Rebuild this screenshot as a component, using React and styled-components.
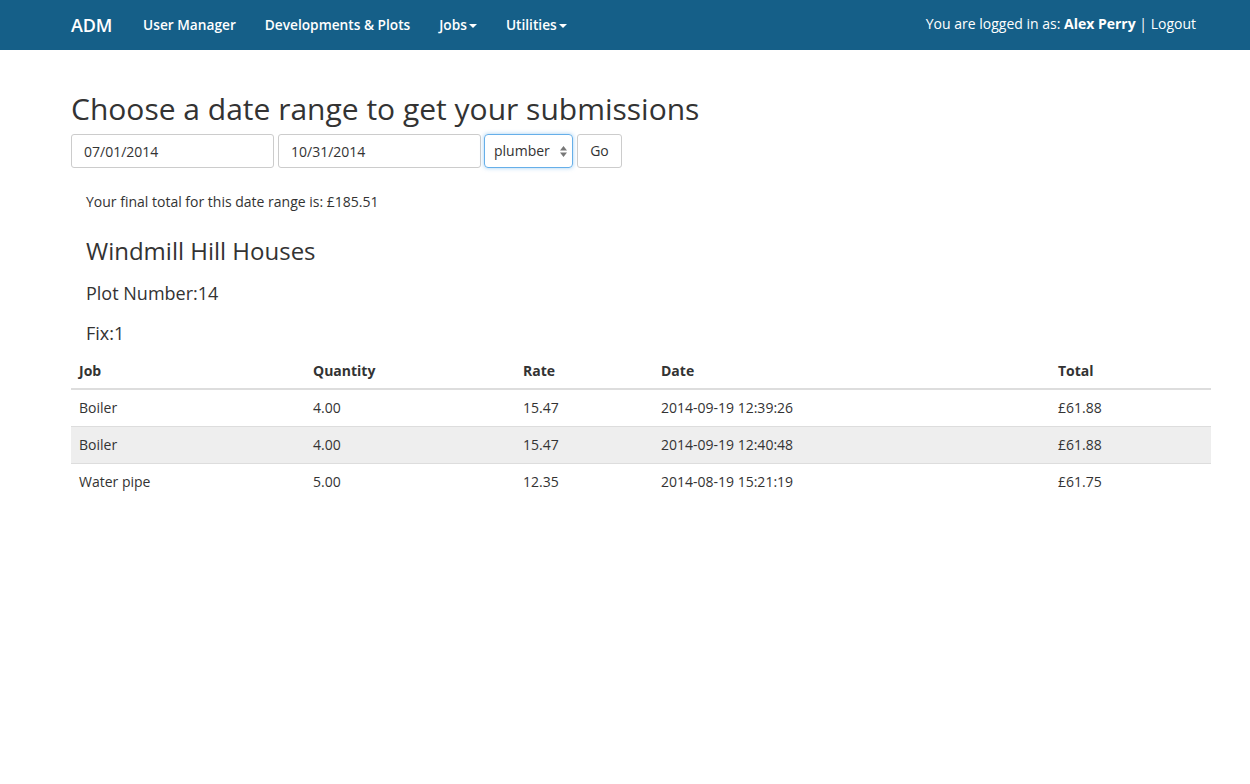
import React from "react";
import styled, { createGlobalStyle } from "styled-components";

const GlobalStyle = createGlobalStyle`
  * { box-sizing: border-box; }
  body {
    margin: 0;
    font-family: "Open Sans", "Liberation Sans", sans-serif;
    font-size: 14px;
    line-height: 1.42857;
    color: #333;
    background: #fff;
  }
`;

const rows = [
  { job: "Boiler", qty: "4.00", rate: "15.47", date: "2014-09-19 12:39:26", total: "£61.88" },
  { job: "Boiler", qty: "4.00", rate: "15.47", date: "2014-09-19 12:40:48", total: "£61.88" },
  { job: "Water pipe", qty: "5.00", rate: "12.35", date: "2014-08-19 15:21:19", total: "£61.75" },
];

const Caret = () => (
  <CaretWrap>
    <svg width="8" height="4" viewBox="0 0 8 4">
      <path d="M0 0h8L4 4z" fill="currentColor" />
    </svg>
  </CaretWrap>
);

export default function App() {
  return (
    <>
      <GlobalStyle />
      <Navbar>
        <NavInner>
          <Brand>ADM</Brand>
          <NavLinks>
            <NavLink>User Manager</NavLink>
            <NavLink>Developments &amp; Plots</NavLink>
            <NavLink>
              Jobs
              <Caret />
            </NavLink>
            <NavLink>
              Utilities
              <Caret />
            </NavLink>
          </NavLinks>
          <LoggedIn>
            You are logged in as: <b>Alex Perry</b> | Logout
          </LoggedIn>
        </NavInner>
      </Navbar>

      <Container>
        <Title>Choose a date range to get your submissions</Title>
        <Form>
          <TextInput defaultValue="07/01/2014" />
          <TextInput defaultValue="10/31/2014" />
          <Select>
            plumber
            <svg width="7" height="11" viewBox="0 0 7 11">
              <path d="M0 4.5L3.5 0 7 4.5z M0 6.5L3.5 11 7 6.5z" fill="#777" />
            </svg>
          </Select>
          <Button>Go</Button>
        </Form>

        <Summary>
          <Total>Your final total for this date range is: £185.51</Total>
          <Development>Windmill Hill Houses</Development>
          <SubHeading>Plot Number:14</SubHeading>
          <SubHeading>Fix:1</SubHeading>
        </Summary>

        <Table>
          <colgroup>
            <col style={{ width: 234 }} />
            <col style={{ width: 210 }} />
            <col style={{ width: 138 }} />
            <col style={{ width: 397 }} />
            <col />
          </colgroup>
          <thead>
            <tr>
              <Th>Job</Th>
              <Th>Quantity</Th>
              <Th>Rate</Th>
              <Th>Date</Th>
              <Th>Total</Th>
            </tr>
          </thead>
          <tbody>
            {rows.map((r, i) => (
              <Row key={i} $striped={i % 2 === 1}>
                <Td>{r.job}</Td>
                <Td>{r.qty}</Td>
                <Td>{r.rate}</Td>
                <Td>{r.date}</Td>
                <Td>{r.total}</Td>
              </Row>
            ))}
          </tbody>
        </Table>
      </Container>
    </>
  );
}

const Navbar = styled.div`
  background: #155f88;
  height: 50px;
  color: #fff;
`;

const NavInner = styled.div`
  display: flex;
  align-items: center;
  height: 50px;
  padding: 0 54px 0 71px;
`;

const Brand = styled.div`
  font-size: 18px;
  font-weight: 600;
  letter-spacing: -0.2px;
  margin-right: 31px;
  padding-top: 1px;
`;

const NavLinks = styled.div`
  display: flex;
  gap: 29px;
  font-weight: 600;
  font-size: 13.7px;
`;

const NavLink = styled.div`
  display: flex;
  align-items: center;
`;

const CaretWrap = styled.span`
  display: inline-flex;
  margin-left: 2px;
  padding-top: 2px;
`;

const LoggedIn = styled.div`
  margin-left: auto;
  font-size: 14px;
  font-weight: 500;
  margin-top: -2px;

  b {
    font-weight: 700;
  }
`;

const Container = styled.div`
  padding: 38px 39px 0 71px;
`;

const Title = styled.h1`
  margin: 0 0 4px;
  font-size: 30px;
  font-weight: 400;
  line-height: 1.4;
  padding-top: 0;
`;

const Form = styled.div`
  display: flex;
  gap: 4px;
`;

const TextInput = styled.input`
  width: 203px;
  height: 34px;
  border: 1px solid #ccc;
  border-radius: 3px;
  padding: 6px 12px;
  font-family: inherit;
  font-size: 14px;
  color: #333;
  outline: none;
`;

const Select = styled.div`
  width: 89px;
  height: 34px;
  margin-left: -1px;
  border: 1px solid #66afe9;
  border-radius: 4px;
  box-shadow: 0 0 4px rgba(102, 175, 233, 0.6);
  display: flex;
  align-items: center;
  justify-content: space-between;
  padding: 0 5px 0 9px;
`;

const Button = styled.div`
  width: 45px;
  height: 34px;
  border: 1px solid #ccc;
  border-radius: 3px;
  display: flex;
  align-items: center;
  justify-content: center;
`;

const Summary = styled.div`
  padding: 0 15px;
`;

const Total = styled.p`
  margin: 24px 0 0;
`;

const Development = styled.h3`
  margin: 26px 0 0;
  font-size: 24px;
  font-weight: 400;
  line-height: 1.1;
`;

const SubHeading = styled.h4`
  margin: 16px 0 0;
  font-size: 18px;
  font-weight: 400;
  line-height: 1.3;

  & + & {
    margin-top: 16px;
  }

  h3 + & {
    margin-top: 18px;
  }
`;

const Table = styled.table`
  width: 100%;
  border-collapse: collapse;
  margin-top: 8px;
  table-layout: fixed;
`;

const Th = styled.th`
  text-align: left;
  font-weight: 700;
  padding: 8px 8px 7px;
  border-bottom: 2px solid #ddd;
`;

const Row = styled.tr`
  background: ${({ $striped }) => ($striped ? "#eeeeee" : "transparent")};
`;

const Td = styled.td`
  padding: 8px;
  border-top: 1px solid #ddd;
  line-height: 1.42857;
`;
